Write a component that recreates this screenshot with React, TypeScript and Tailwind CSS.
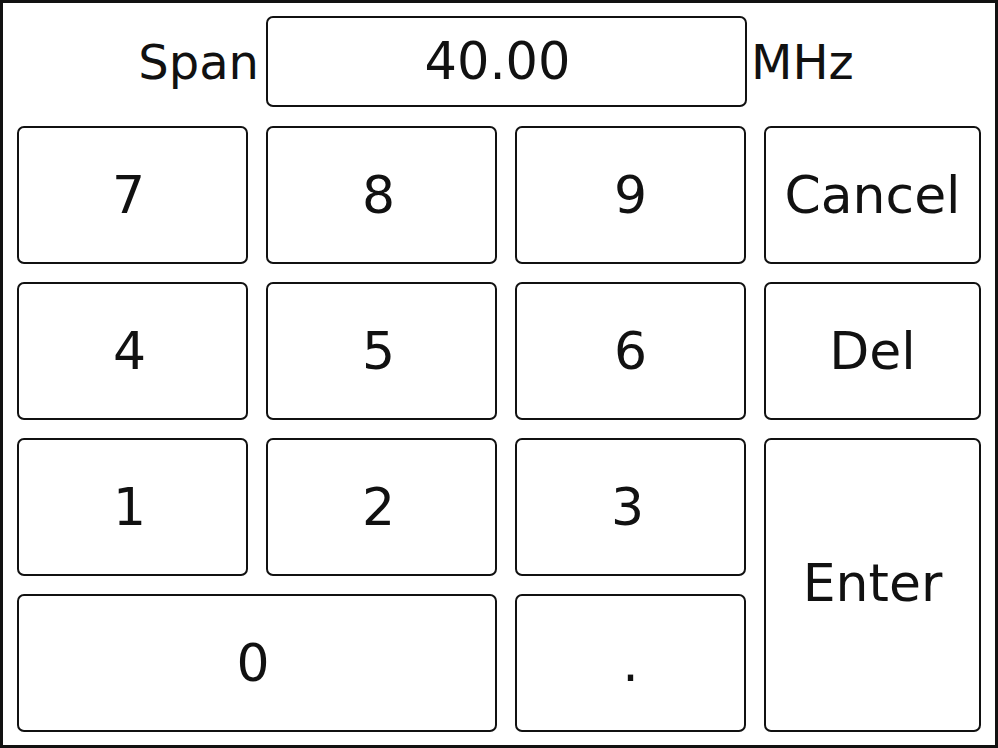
import React from "react";

const font = { fontFamily: '"DejaVu Sans", "Liberation Sans", sans-serif' };

function Key({ label, className = "" }: { label: string; className?: string }) {
  return (
    <div
      className={`flex items-center justify-center rounded-[7px] border-[2.5px] border-[#111] bg-white text-[52px] leading-none text-[#111] ${className}`}
    >
      {label}
    </div>
  );
}

export default function App() {
  return (
    <div
      className="h-[748px] w-[998px] overflow-hidden border-[3px] border-[#111] bg-white text-[#111]"
      style={font}
    >
      <div className="mt-[13px] flex h-[91px] items-center">
        <div className="w-[263px] pr-[7px] text-right text-[48px] leading-none">Span</div>
        <div className="flex h-[91px] w-[481px] items-center justify-center rounded-[7px] border-[2.5px] border-[#111] pr-[18px] text-[51px] leading-none">
          40.00
        </div>
        <div className="pl-[4px] text-[48px] leading-none">MHz</div>
      </div>
      <div className="ml-[14px] mt-[19px] grid grid-cols-[231px_231px_231px_217px] grid-rows-[138px_138px_138px_138px] gap-x-[18px] gap-y-[18px]">
        <Key label="7" className="pr-[8px]" />
        <Key label="8" className="pr-[6px]" />
        <Key label="9" />
        <Key label="Cancel" />
        <Key label="4" className="pr-[6px]" />
        <Key label="5" className="pr-[6px]" />
        <Key label="6" />
        <Key label="Del" />
        <Key label="1" className="pr-[6px]" />
        <Key label="2" className="pr-[6px]" />
        <Key label="3" className="pr-[6px]" />
        <Key label="Enter" className="row-span-2 pb-[4px]" />
        <Key label="0" className="col-span-2 pr-[8px]" />
        <Key label="." />
      </div>
    </div>
  );
}
